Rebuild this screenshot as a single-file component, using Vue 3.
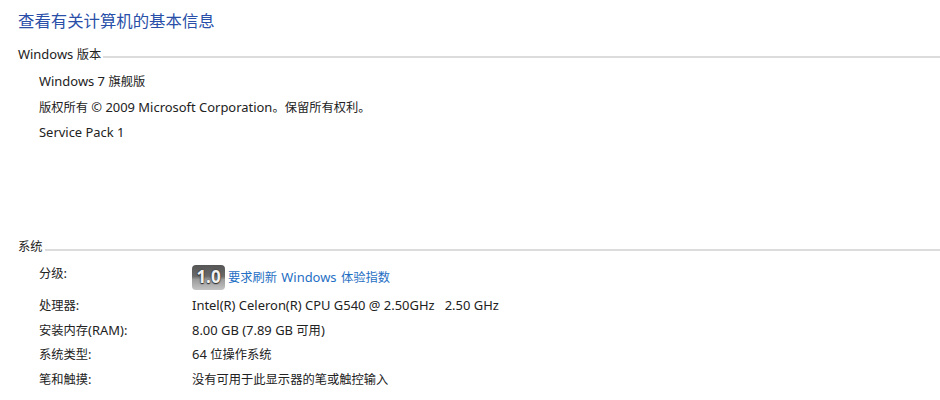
<script setup>
const versionLines = [
  [['Windows 7 ', 1], ['旗舰版', 0]],
  [['版权所有 ', 0], ['© 2009 Microsoft Corporation', 1], ['。保留所有权利。', 0]],
  [['Service Pack 1', 1]]
]
const specs = [
  { label: [['处理器', 0], [':', 1]], value: [['Intel(R) Celeron(R) CPU G540 @ 2.50GHz   2.50 GHz', 1]] },
  { label: [['安装内存', 0], ['(RAM):', 1]], value: [['8.00 GB (7.89 GB ', 1], ['可用', 0], [')', 1]] },
  { label: [['系统类型', 0], [':', 1]], value: [['64 ', 1], ['位操作系统', 0]] },
  { label: [['笔和触摸', 0], [':', 1]], value: [['没有可用于此显示器的笔或触控输入', 0]] }
]
</script>

<template>
  <div class="page">
    <h1 class="title">查看有关计算机的基本信息</h1>

    <section class="version">
      <div class="heading"><span><span class="lat">Windows </span>版本</span><i class="rule"></i></div>
      <div class="lines">
        <div v-for="(line, i) in versionLines" :key="i" class="line">
          <span v-for="(p, j) in line" :key="j" :class="{ lat: p[1] }">{{ p[0] }}</span>
        </div>
      </div>
    </section>

    <section class="system">
      <div class="heading"><span>系统</span><i class="rule"></i></div>
      <div class="row rating">
        <div class="label rating-label">分级<span class="lat">:</span></div>
        <div class="value rating-value">
          <span class="badge"><span class="score">1.0</span></span>
          <span class="link">要求刷新 <span class="lat">Windows </span>体验指数</span>
        </div>
      </div>
      <div v-for="(s, i) in specs" :key="i" class="row spec">
        <div class="label"><span v-for="(p, j) in s.label" :key="j" :class="{ lat: p[1] }">{{ p[0] }}</span></div>
        <div class="value"><span v-for="(p, j) in s.value" :key="j" :class="{ lat: p[1] }">{{ p[0] }}</span></div>
      </div>
    </section>
  </div>
</template>

<style scoped>
.page {
  width: 940px;
  height: 400px;
  overflow: hidden;
  background: #fff;
  box-sizing: border-box;
  padding: 11px 0 0 18px;
  color: #222;
  font-family: "Noto Sans", "Noto Sans CJK SC", sans-serif;
  font-size: 12.27px;
}
.lat { font-size: 12.95px; }
.title {
  margin: 0;
  font-size: 16.4px;
  line-height: 20px;
  font-weight: 400;
  color: #2a4fa8;
}
.version { margin-top: 15px; height: 187px; }
.heading {
  display: flex;
  align-items: center;
  height: 16px;
  line-height: 16px;
}
.rule {
  flex: 1;
  height: 2px;
  margin: 6px 0 0 2px;
  background: #dcdcdc;
}
.lines { margin: 11px 0 0 21px; }
.line { height: 25.5px; line-height: 17px; white-space: pre; }
.system { margin-top: 6px; }
.row { display: flex; }
.label { width: 153px; margin-left: 21px; flex: none; }
.value { white-space: pre; }
.rating { margin-top: 9px; height: 29px; }
.rating-label { padding-top: 1px; line-height: 17px; }
.rating-value { display: flex; align-items: center; height: 26px; gap: 3px; }
.badge {
  width: 33px;
  height: 25px;
  border-radius: 4px;
  background: linear-gradient(180deg, #555 0%, #6a6a6a 45%, #9c9c9c 58%, #c4c4c4 100%);
  display: flex;
  align-items: center;
  justify-content: center;
}
.score {
  font-size: 17px;
  font-weight: 700;
  line-height: 20px;
  color: #f2f2f2;
  text-shadow: 0 0 2px #2a2a2a, 0 1px 1px #2a2a2a;
}
.link { color: #1f6fc4; word-spacing: 1px; }
.spec { height: 24.7px; line-height: 17px; align-items: center; }
</style>

<style>
html, body { margin: 0; background: #fff; }
</style>
